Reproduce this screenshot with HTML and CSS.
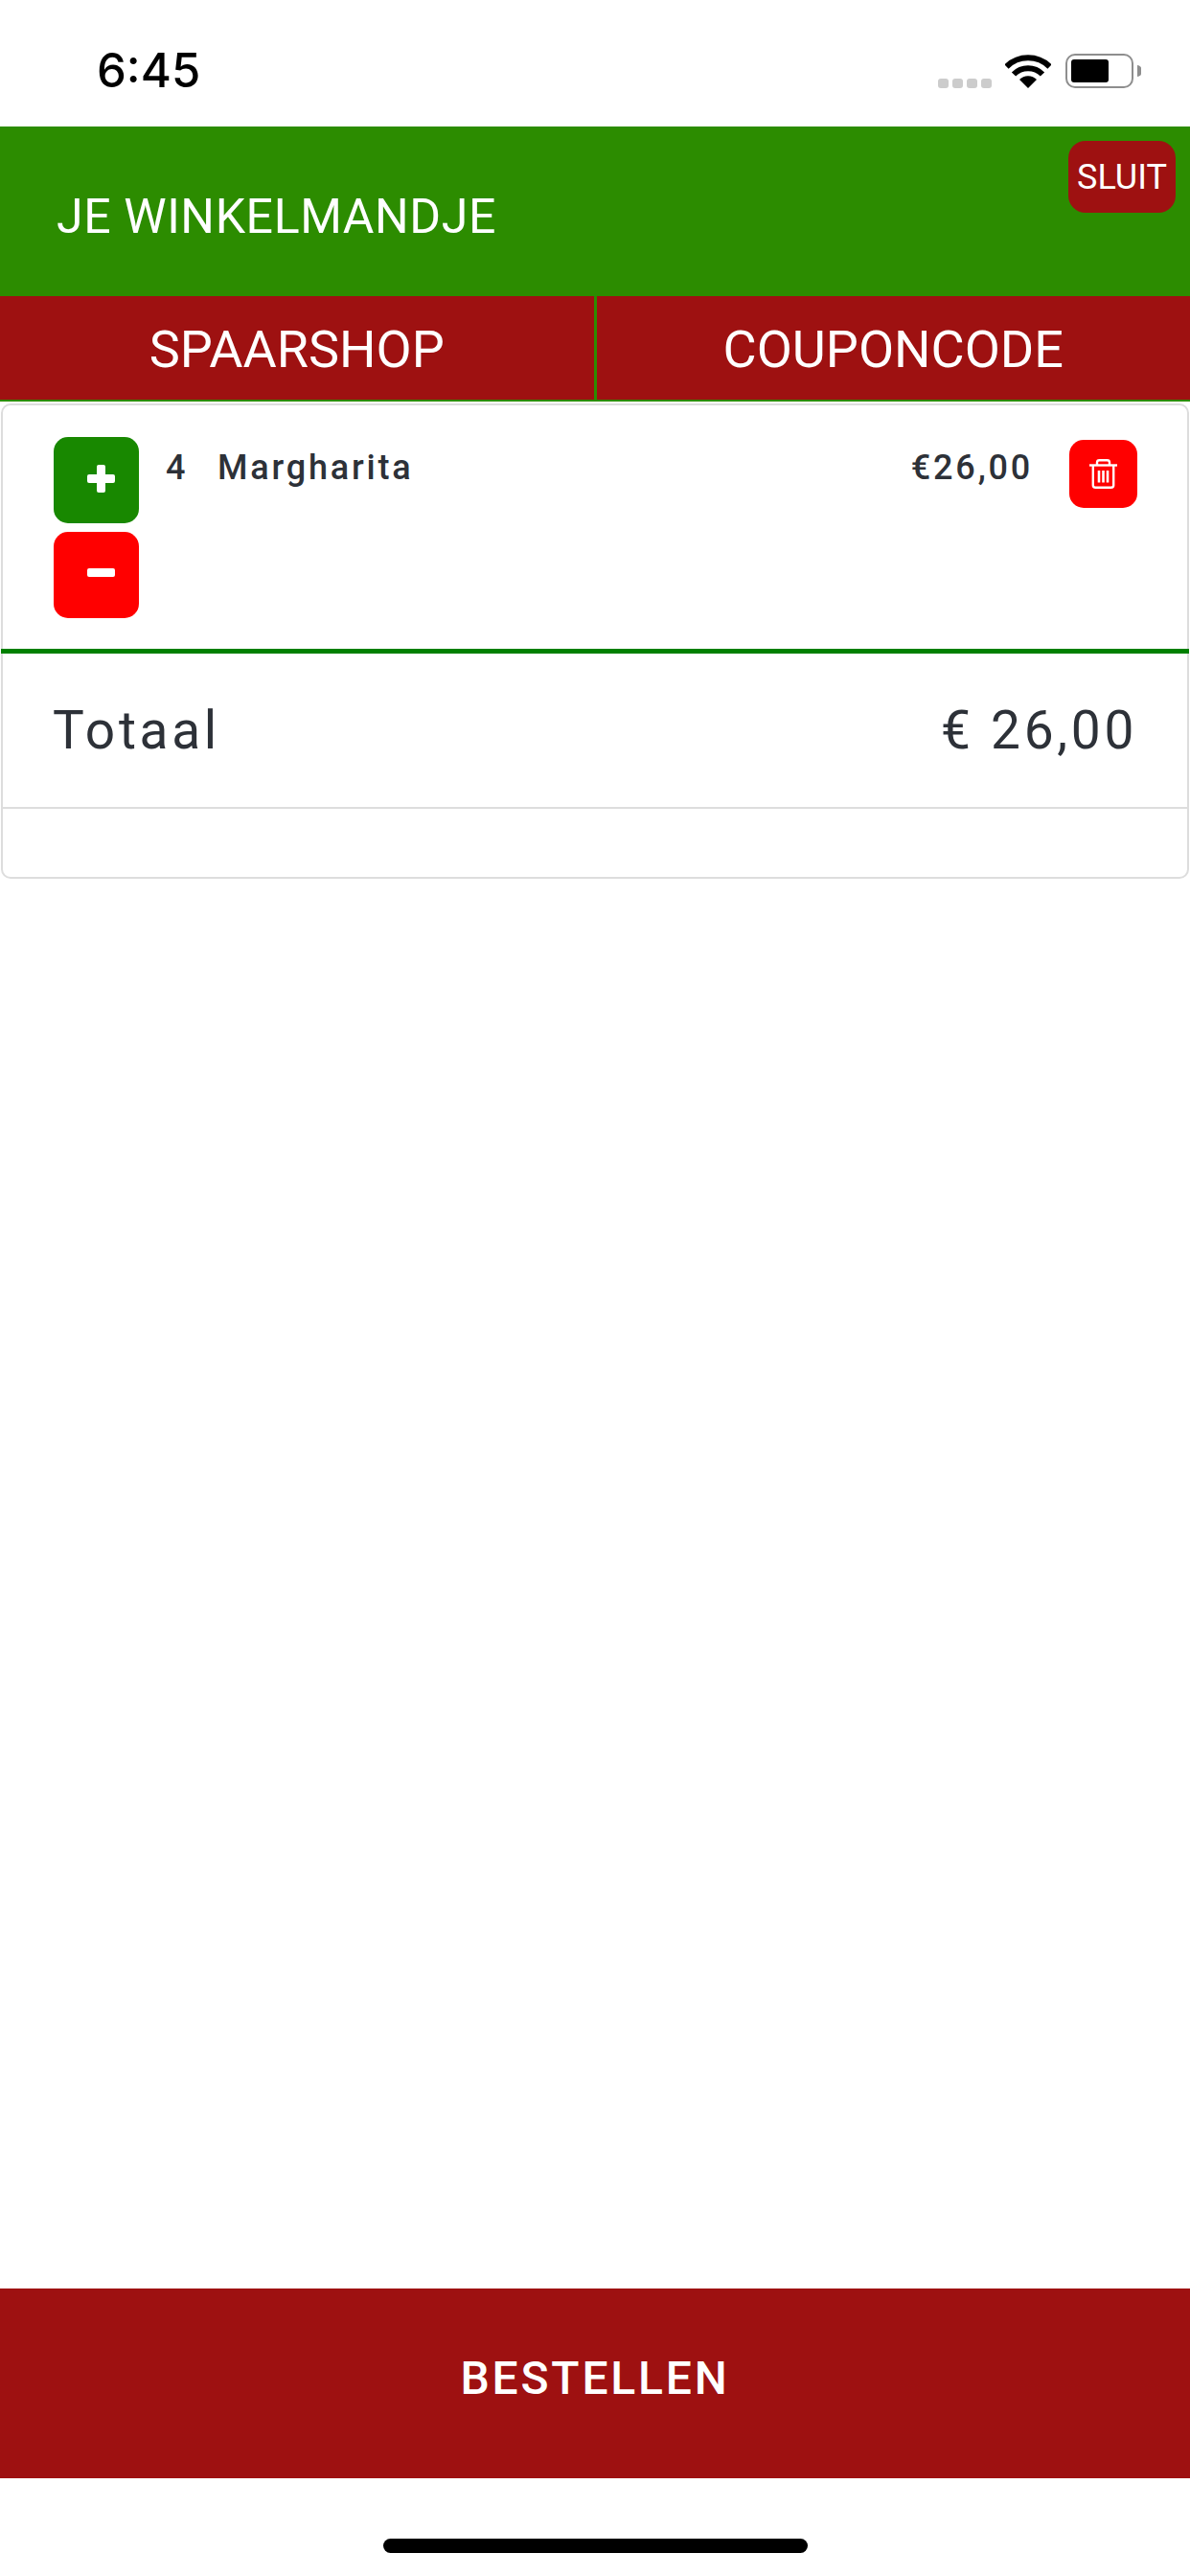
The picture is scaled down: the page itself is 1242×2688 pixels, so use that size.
FILE: index.html
```html
<!DOCTYPE html>
<html lang="nl">
<head>
    <meta charset="UTF-8">
    <meta name="viewport" content="width=device-width, initial-scale=1.0">
    <title>Je winkelmandje</title>
    <link rel="stylesheet" href="styles.css">
</head>
<body>

<div class="statusBar">
    <span class="time">6:45</span>
    <div class="statusIcons">
        <div class="signal"><span></span><span></span><span></span><span></span></div>
        <svg class="wifi" width="48" height="36" viewBox="0 0 48 36">
            <path d="M1.5 13.5A32 32 0 0 1 46.5 13.5" fill="none" stroke="#000" stroke-width="6"/>
            <path d="M9 21.5A21 21 0 0 1 39 21.5" fill="none" stroke="#000" stroke-width="6"/>
            <path d="M24 36L15 27A12.5 12.5 0 0 1 33 27Z" fill="#000"/>
        </svg>
        <svg class="battery" width="79" height="36" viewBox="0 0 79 36">
            <rect x="1" y="1" width="69" height="34" rx="9" fill="none" stroke="#8e8e8e" stroke-width="2"/>
            <rect x="6" y="6" width="39" height="24" rx="3" fill="#000"/>
            <path d="M75 12a5 6 0 0 1 0 12Z" fill="#8e8e8e"/>
        </svg>
    </div>
</div>

<div class="header">
    <h1>JE WINKELMANDJE</h1>
    <button type="button" class="closeBtn">SLUIT</button>
</div>

<div class="tabs">
    <div class="tab">SPAARSHOP</div>
    <div class="tab">COUPONCODE</div>
</div>

<div class="main">
    <div class="card">
        <div class="itemRow">
            <div class="stepper">
                <button type="button" class="stepBtn plusBtn" aria-label="Meer"><span class="plusIcon"></span></button>
                <button type="button" class="stepBtn minusBtn" aria-label="Minder"><span class="minusIcon"></span></button>
            </div>
            <span class="itemQty">4</span>
            <span class="itemName">Margharita</span>
            <span class="itemPrice">€26,00</span>
            <button type="button" class="trashBtn" aria-label="Verwijder">
                <svg width="29" height="31" viewBox="0 0 29 31" fill="none" stroke="#fff" stroke-width="2.4">
                    <path d="M0 6.5H29"/>
                    <path d="M8 6.5V3.5A2.4 2.4 0 0 1 10.4 1.2H18.6A2.4 2.4 0 0 1 21 3.5V6.5"/>
                    <path d="M3.8 6.5V27.5A2.4 2.4 0 0 0 6.2 29.8H22.8A2.4 2.4 0 0 0 25.2 27.5V6.5"/>
                    <path d="M10 12V24.5M14.5 12V24.5M19 12V24.5" stroke-width="2.6"/>
                </svg>
            </button>
        </div>
        <div class="totalRow">
            <span>Totaal</span>
            <span>€ 26,00</span>
        </div>
        <div class="emptyRow"></div>
    </div>
</div>

<button type="button" class="orderBtn">BESTELLEN</button>

<div class="homeArea"><div class="homeBar"></div></div>

</body>
</html>
```

FILE: styles.css
```css
body {
    margin: 0;
    width: 1242px;
    height: 2688px;
    display: flex;
    flex-direction: column;
    font-family: Roboto, "Liberation Sans", sans-serif;
    background-color: #fff;
    overflow: hidden;
}
button {
    border: none;
    padding: 0;
    font-family: inherit;
    cursor: pointer;
}

/* status bar */
.statusBar {
    height: 132px;
    flex-shrink: 0;
    display: flex;
    justify-content: space-between;
    padding: 56px 51px 0 101px;
    box-sizing: border-box;
}
.time {
    font-family: Inter, Roboto, sans-serif;
    font-size: 49px;
    font-weight: 500;
    line-height: 36px;
    color: #000;
}
.statusIcons {
    display: flex;
    align-items: flex-start;
}
.signal {
    display: flex;
    gap: 4px;
    margin-top: 26px;
    margin-right: 14px;
}
.signal span {
    width: 11px;
    height: 10px;
    border-radius: 3px;
    background-color: #ccc;
}
.wifi {
    margin-right: 15px;
}

/* green header */
.header {
    height: 177px;
    flex-shrink: 0;
    display: flex;
    justify-content: space-between;
    align-items: flex-start;
    padding: 15px 15px 0 59px;
    box-sizing: border-box;
    background-color: #2c8c00;
}
.header h1 {
    margin: 50px 0 0 0;
    font-size: 50px;
    font-weight: 400;
    line-height: 58px;
    letter-spacing: 0.6px;
    color: #fff;
}
.closeBtn {
    width: 112px;
    height: 75px;
    border-radius: 18px;
    background-color: #9e1111;
    color: #fff;
    font-size: 36px;
}

/* tabs */
.tabs {
    height: 110px;
    flex-shrink: 0;
    display: flex;
    box-sizing: border-box;
    border-bottom: 2px solid #2c8c00;
    background-color: #9e1111;
}
.tab {
    flex: 1;
    display: flex;
    align-items: center;
    justify-content: center;
    padding-top: 3px;
    font-size: 54px;
    color: #fff;
}
.tab:first-child {
    border-right: 3px solid #2c8c00;
}

/* cart */
.main {
    flex: 1;
    padding: 2px 1px 0 1px;
}
.card {
    border: 2px solid #ddd;
    border-radius: 10px;
}
.itemRow {
    display: flex;
    align-items: flex-start;
    margin: 0 -2px;
    padding: 33px 54px 32px 55px;
    border-bottom: 5px solid #008000;
    color: #2d3138;
    font-size: 36px;
    font-weight: 500;
    letter-spacing: 2.8px;
    line-height: 40px;
}
.stepper {
    display: flex;
    flex-direction: column;
    gap: 9px;
}
.stepBtn {
    width: 89px;
    height: 90px;
    border-radius: 15px;
    display: flex;
    align-items: center;
    justify-content: center;
}
.plusBtn {
    background-color: #188800;
}
.minusBtn {
    background-color: #f00;
}
.plusIcon, .minusIcon {
    display: block;
    width: 29px;
    height: 9px;
    margin: 0 0 3px 10px;
    border-radius: 2px;
    background-color: #fff;
    position: relative;
}
.minusIcon {
    margin-bottom: 5px;
}
.plusIcon::after {
    content: "";
    position: absolute;
    left: 10px;
    top: -10px;
    width: 9px;
    height: 29px;
    border-radius: 2px;
    background-color: #fff;
}
.itemQty {
    margin: 12px 0 0 28px;
    width: 54px;
}
.itemName {
    margin-top: 12px;
    flex: 1;
}
.itemPrice {
    margin: 12px 38px 0 0;
}
.trashBtn {
    width: 71px;
    height: 71px;
    margin-top: 3px;
    border-radius: 15px;
    background-color: #f00;
    display: flex;
    align-items: center;
    justify-content: center;
}
.totalRow {
    height: 162px;
    display: flex;
    align-items: center;
    justify-content: space-between;
    padding: 0 52px 0 52px;
    box-sizing: border-box;
    border-bottom: 2px solid #ddd;
    color: #2d3138;
    font-size: 55px;
    font-weight: 400;
    letter-spacing: 3.7px;
}
.emptyRow {
    height: 71px;
}

/* bottom */
.orderBtn {
    height: 198px;
    flex-shrink: 0;
    padding-bottom: 12px;
    background-color: #9e1111;
    color: #fff;
    font-size: 48px;
    font-weight: 500;
    letter-spacing: 2.8px;
}
.homeArea {
    height: 102px;
    flex-shrink: 0;
    padding-top: 63px;
    box-sizing: border-box;
    display: flex;
    justify-content: center;
}
.homeBar {
    width: 443px;
    height: 15px;
    margin-left: 1px;
    border-radius: 8px;
    background-color: #000;
}
```
